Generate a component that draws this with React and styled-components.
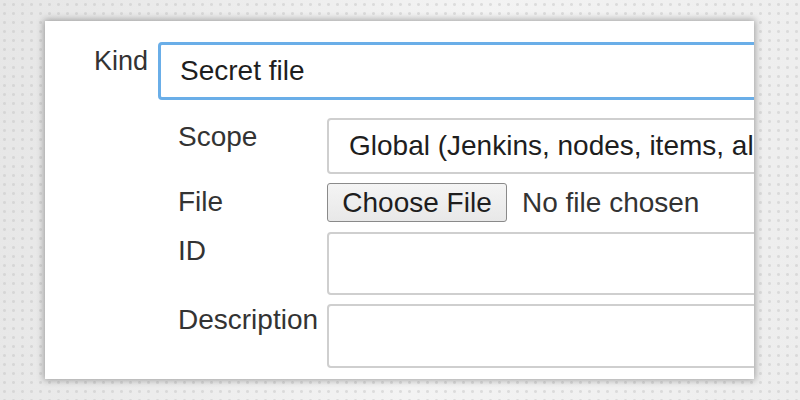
import React from 'react';
import styled, { createGlobalStyle } from 'styled-components';

const GlobalStyle = createGlobalStyle`
    html, body {
        margin: 0;
        padding: 0;
    }
    body {
        font-family: "Liberation Sans", Arial, sans-serif;
        color: #2b2b2b;
    }
`;

const Page = styled.div`
    width: 800px;
    height: 400px;
    box-sizing: border-box;
    padding: 21px 46px 21px 45px;
    background:
        radial-gradient(circle, rgba(195,195,195,0.45) 1.2px, transparent 1.7px) 0 0 / 9px 9px,
        linear-gradient(100deg, #e6e6e6 0%, #f3f3f3 55%, #ededed 100%);
`;

const Card = styled.div`
    width: 100%;
    height: 100%;
    box-sizing: border-box;
    background: #fff;
    box-shadow: 0 0 7px 1px rgba(0,0,0,0.35);
    overflow: hidden;
    padding-top: 21px;
    display: flex;
    flex-direction: column;
`;

const KindRow = styled.div`
    display: flex;
    align-items: flex-start;
    gap: 10px;
`;

const KindLabel = styled.div`
    flex: 0 0 103px;
    text-align: right;
    font-size: 27px;
    line-height: 30px;
    padding-top: 4px;
    color: #333;
`;

const KindSelect = styled.div`
    flex: 0 0 700px;
    height: 58px;
    box-sizing: border-box;
    border: 3px solid #6aaee8;
    border-radius: 4px;
    padding-left: 19px;
    display: flex;
    align-items: center;
    font-size: 28px;
    color: #1e1e1e;
`;

const Fields = styled.div`
    display: grid;
    grid-template-columns: 149px 700px;
    row-gap: 9px;
    padding-left: 133px;
    margin-top: 18px;
`;

const Label = styled.div`
    font-size: 28px;
    line-height: 30px;
    padding-top: ${p => p.$top ?? 4}px;
    color: #333;
    white-space: nowrap;
`;

const Box = styled.div`
    height: ${p => p.$h}px;
    box-sizing: border-box;
    border: 2px solid #cfcfcf;
    border-radius: 4px;
    padding-left: 20px;
    display: flex;
    align-items: center;
    font-size: 28px;
    color: #1e1e1e;
    white-space: nowrap;
    overflow: hidden;
`;

const FileCell = styled.div`
    display: flex;
    align-items: center;
    gap: 15px;
    margin-bottom: 1px;
`;

const FileButton = styled.button`
    width: 180px;
    height: 39px;
    box-sizing: border-box;
    border: 1px solid #8a8a8a;
    border-radius: 3px;
    background: linear-gradient(#f4f4f4, #e8e8e8);
    font-family: "Liberation Sans", Arial, sans-serif;
    font-size: 28px;
    color: #1e1e1e;
    padding: 0;
`;

const FileText = styled.span`
    font-size: 28px;
    color: #333;
`;

export default function App() {
    return (
        <>
            <GlobalStyle />
            <Page>
                <Card>
                    <KindRow>
                        <KindLabel>Kind</KindLabel>
                        <KindSelect>Secret file</KindSelect>
                    </KindRow>
                    <Fields>
                        <Label>Scope</Label>
                        <Box $h={56}>Global (Jenkins, nodes, items, al</Box>

                        <Label>File</Label>
                        <FileCell>
                            <FileButton>Choose File</FileButton>
                            <FileText>No file chosen</FileText>
                        </FileCell>

                        <Label>ID</Label>
                        <Box $h={63} />

                        <Label $top={1}>Description</Label>
                        <Box $h={64} />
                    </Fields>
                </Card>
            </Page>
        </>
    );
}
